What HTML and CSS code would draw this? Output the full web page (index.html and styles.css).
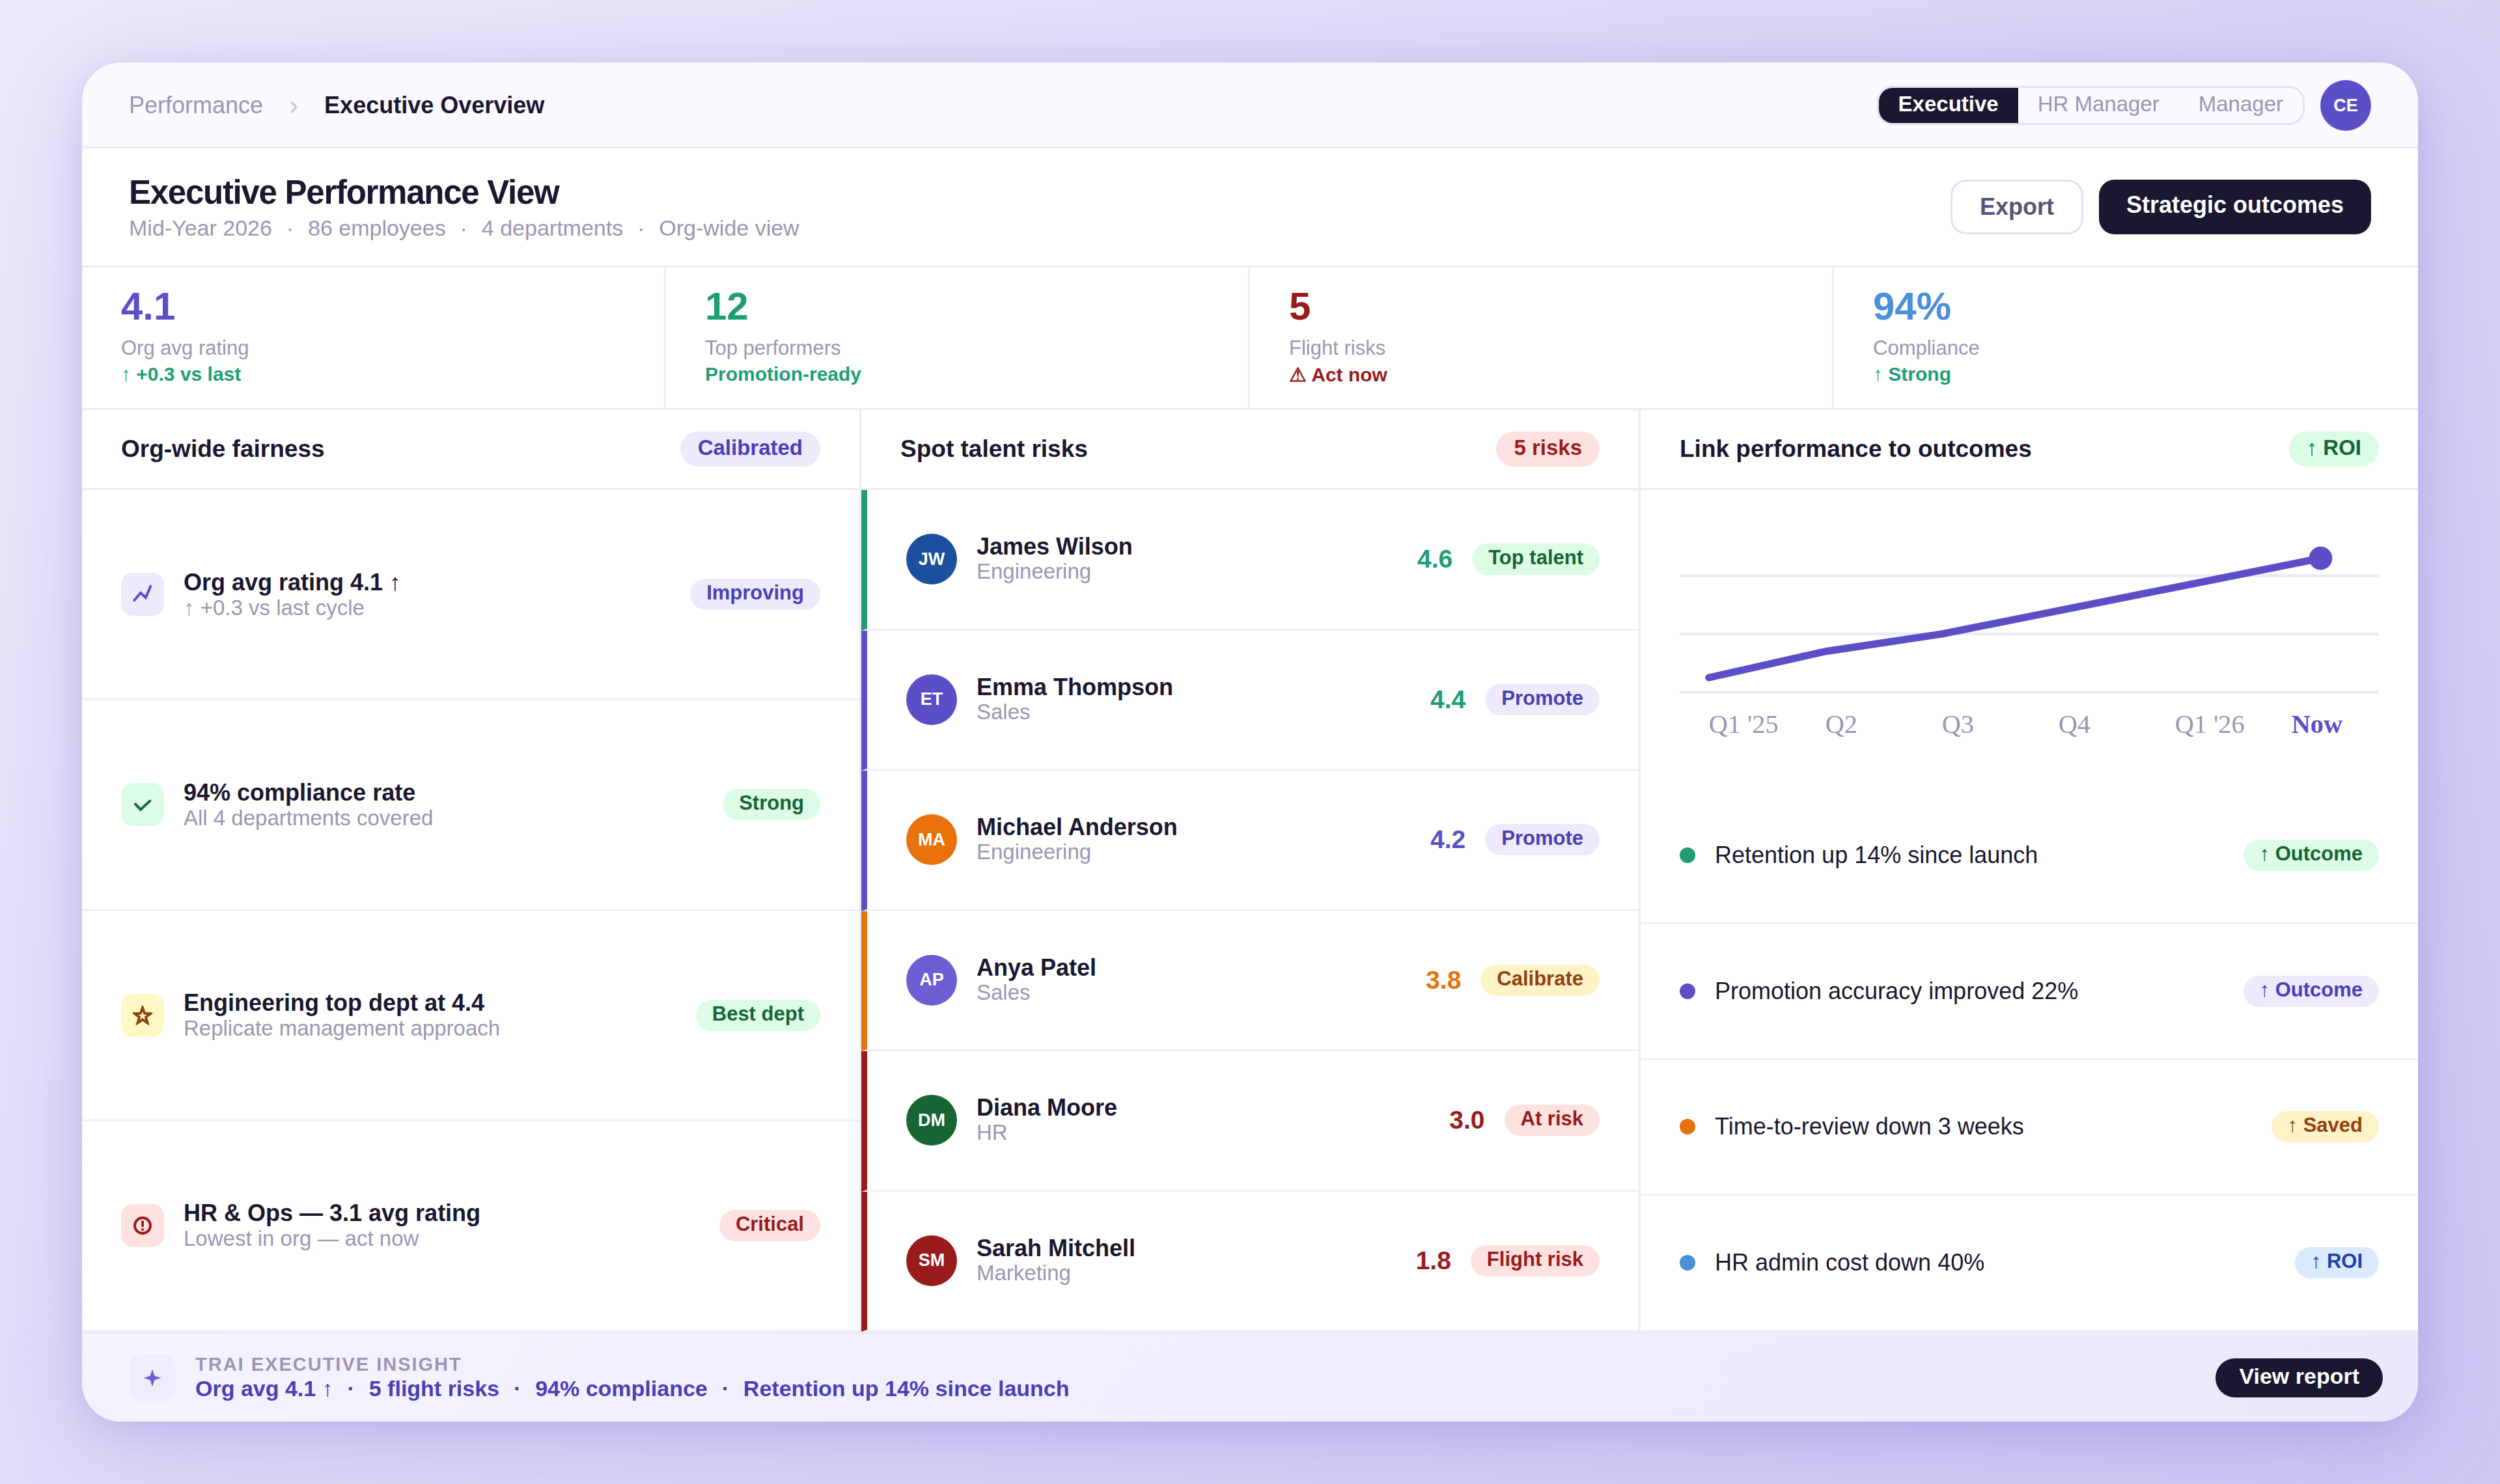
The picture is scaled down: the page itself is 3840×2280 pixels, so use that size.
FILE: index.html
```
<!DOCTYPE html>
<html lang="en">
<head>
    <meta charset="UTF-8">
    <meta name="viewport" content="width=device-width, initial-scale=1.0">
    <title>Executive Performance View</title>
    <link rel="stylesheet" href="styles.css">
</head>
<body>
    <div class="card">
        <header class="topbar">
            <nav class="breadcrumb">
                <a href="#">Performance</a>
                <span class="sep">›</span>
                <strong>Executive Overview</strong>
            </nav>
            <div class="topbar-right">
                <div class="tabs">
                    <button class="tab active">Executive</button>
                    <button class="tab">HR Manager</button>
                    <button class="tab">Manager</button>
                </div>
                <div class="avatar user">CE</div>
            </div>
        </header>

        <section class="page-head">
            <div>
                <h1>Executive Performance View</h1>
                <p>Mid-Year 2026 &nbsp;<i>·</i>&nbsp; 86 employees &nbsp;<i>·</i>&nbsp; 4 departments &nbsp;<i>·</i>&nbsp; Org-wide view</p>
            </div>
            <div class="actions">
                <button class="btn outline">Export</button>
                <button class="btn primary">Strategic outcomes</button>
            </div>
        </section>

        <section class="kpis">
            <div class="kpi">
                <div class="value c-purple">4.1</div>
                <div class="label">Org avg rating</div>
                <div class="delta c-green">↑ +0.3 vs last</div>
            </div>
            <div class="kpi">
                <div class="value c-green">12</div>
                <div class="label">Top performers</div>
                <div class="delta c-green">Promotion-ready</div>
            </div>
            <div class="kpi">
                <div class="value c-red">5</div>
                <div class="label">Flight risks</div>
                <div class="delta c-red">⚠ Act now</div>
            </div>
            <div class="kpi">
                <div class="value c-blue">94%</div>
                <div class="label">Compliance</div>
                <div class="delta c-green">↑ Strong</div>
            </div>
        </section>

        <main class="columns">
            <section class="column">
                <div class="column-head">
                    <h2>Org-wide fairness</h2>
                    <span class="pill large purple">Calibrated</span>
                </div>
                <ul class="rows">
                    <li class="row">
                        <span class="icon purple">
                            <svg viewBox="0 0 10 10"><path d="M.8 8.100L4 4.300l2.600 2.400L9.100.9"/></svg>
                        </span>
                        <div class="info">
                            <h3>Org avg rating 4.1 ↑</h3>
                            <p>↑ +0.3 vs last cycle</p>
                        </div>
                        <span class="pill purple">Improving</span>
                    </li>
                    <li class="row">
                        <span class="icon green">
                            <svg viewBox="0 0 10 10"><path d="M1.300 4.800L4 7.600l4.800-4.400"/></svg>
                        </span>
                        <div class="info">
                            <h3>94% compliance rate</h3>
                            <p>All 4 departments covered</p>
                        </div>
                        <span class="pill green">Strong</span>
                    </li>
                    <li class="row">
                        <span class="icon yellow">
                            <svg viewBox="0 0 10 10"><path d="M5 1.100L6.030 3.980 9.090 4.070 6.660 5.940 7.530 8.880 5 7.150 2.470 8.880 3.340 5.940.91 4.070 3.970 3.980z"/></svg>
                        </span>
                        <div class="info">
                            <h3>Engineering top dept at 4.4</h3>
                            <p>Replicate management approach</p>
                        </div>
                        <span class="pill green">Best dept</span>
                    </li>
                    <li class="row">
                        <span class="icon red">
                            <svg viewBox="0 0 10 10"><circle cx="5" cy="5" r="4"/><path d="M5 3v2.200M5 7v.1"/></svg>
                        </span>
                        <div class="info">
                            <h3>HR &amp; Ops — 3.1 avg rating</h3>
                            <p>Lowest in org — act now</p>
                        </div>
                        <span class="pill red">Critical</span>
                    </li>
                </ul>
            </section>

            <section class="column">
                <div class="column-head">
                    <h2>Spot talent risks</h2>
                    <span class="pill large red">5 risks</span>
                </div>
                <ul class="rows">
                    <li class="row person edge-green">
                        <span class="avatar bg-navy">JW</span>
                        <div class="info">
                            <h3>James Wilson</h3>
                            <p>Engineering</p>
                        </div>
                        <span class="score c-green">4.6</span>
                        <span class="pill green">Top talent</span>
                    </li>
                    <li class="row person edge-purple">
                        <span class="avatar bg-purple">ET</span>
                        <div class="info">
                            <h3>Emma Thompson</h3>
                            <p>Sales</p>
                        </div>
                        <span class="score c-green">4.4</span>
                        <span class="pill purple">Promote</span>
                    </li>
                    <li class="row person edge-purple">
                        <span class="avatar bg-orange">MA</span>
                        <div class="info">
                            <h3>Michael Anderson</h3>
                            <p>Engineering</p>
                        </div>
                        <span class="score c-purple">4.2</span>
                        <span class="pill purple">Promote</span>
                    </li>
                    <li class="row person edge-orange">
                        <span class="avatar bg-violet">AP</span>
                        <div class="info">
                            <h3>Anya Patel</h3>
                            <p>Sales</p>
                        </div>
                        <span class="score c-orange">3.8</span>
                        <span class="pill amber">Calibrate</span>
                    </li>
                    <li class="row person edge-red">
                        <span class="avatar bg-green">DM</span>
                        <div class="info">
                            <h3>Diana Moore</h3>
                            <p>HR</p>
                        </div>
                        <span class="score c-red">3.0</span>
                        <span class="pill red">At risk</span>
                    </li>
                    <li class="row person edge-red">
                        <span class="avatar bg-red">SM</span>
                        <div class="info">
                            <h3>Sarah Mitchell</h3>
                            <p>Marketing</p>
                        </div>
                        <span class="score c-red">1.8</span>
                        <span class="pill red">Flight risk</span>
                    </li>
                </ul>
            </section>

            <section class="column">
                <div class="column-head">
                    <h2>Link performance to outcomes</h2>
                    <span class="pill large green">↑ ROI</span>
                </div>
                <div class="chart">
                    <svg viewBox="0 0 240 80">
                        <g class="grid">
                            <line x1="0" y1="20" x2="240" y2="20"/>
                            <line x1="0" y1="40" x2="240" y2="40"/>
                            <line x1="0" y1="60" x2="240" y2="60"/>
                        </g>
                        <polyline class="trend" points="10,55 50,46 90,40 130,32 170,24 220,14"/>
                        <circle class="point" cx="220" cy="14" r="4"/>
                        <g class="axis">
                            <text x="10" y="74">Q1 '25</text>
                            <text x="50" y="74">Q2</text>
                            <text x="90" y="74">Q3</text>
                            <text x="130" y="74">Q4</text>
                            <text x="170" y="74">Q1 '26</text>
                            <text class="now" x="210" y="74">Now</text>
                        </g>
                    </svg>
                </div>
                <ul class="rows">
                    <li class="row outcome">
                        <span class="dot bg-teal"></span>
                        <span class="info">Retention up 14% since launch</span>
                        <span class="pill green">↑ Outcome</span>
                    </li>
                    <li class="row outcome">
                        <span class="dot bg-purple"></span>
                        <span class="info">Promotion accuracy improved 22%</span>
                        <span class="pill purple">↑ Outcome</span>
                    </li>
                    <li class="row outcome">
                        <span class="dot bg-orange"></span>
                        <span class="info">Time-to-review down 3 weeks</span>
                        <span class="pill amber">↑ Saved</span>
                    </li>
                    <li class="row outcome">
                        <span class="dot bg-blue"></span>
                        <span class="info">HR admin cost down 40%</span>
                        <span class="pill blue">↑ ROI</span>
                    </li>
                </ul>
            </section>
        </main>

        <footer class="insight">
            <span class="spark">
                <svg viewBox="0 0 14 14"><path d="M7 2.500l1.100 3.400L11.500 7 8.100 8.100 7 11.500 5.900 8.100 2.500 7l3.400-1.100z"/></svg>
            </span>
            <div class="info">
                <div class="eyebrow">TRAI EXECUTIVE INSIGHT</div>
                <div class="summary">Org avg 4.1 ↑ &nbsp;<i>·</i>&nbsp; 5 flight risks &nbsp;<i>·</i>&nbsp; 94% compliance &nbsp;<i>·</i>&nbsp; Retention up 14% since launch</div>
            </div>
            <button class="report">View report</button>
        </footer>
    </div>
</body>
</html>
```
FILE: styles.css
```
* {
    box-sizing: border-box;
    margin: 0;
    padding: 0;
}
body {
    min-height: 100vh;
    padding: 96px 126px;
    display: flex;
    background: linear-gradient(135deg, #eeebfb 0%, #ddd7f7 50%, #cec6f2 100%);
    font-family: "Liberation Sans", Arial, sans-serif;
    font-size: 36px;
    color: #1a1730;
}
button {
    font-family: inherit;
    border: none;
    cursor: pointer;
}
ul {
    list-style: none;
}
/* separator dots */
i {
    margin: 0 3px;
    font-style: normal;
}
.card {
    flex: 1;
    display: flex;
    flex-direction: column;
    background: #fff;
    border-radius: 60px;
    overflow: hidden;
    box-shadow: 0 24px 144px rgba(91, 79, 199, 0.22), 0 12px 48px rgba(91, 79, 199, 0.12);
}

/* top bar */
.topbar {
    height: 132px;
    padding: 3px 72px 0;
    display: flex;
    align-items: center;
    justify-content: space-between;
    background: #faf9ff;
    border-bottom: 3px solid #edeaf8;
}
.breadcrumb {
    display: flex;
    align-items: center;
    gap: 40px;
}
.breadcrumb a {
    color: #9b96b4;
    text-decoration: none;
}
.sep {
    font-size: 42px;
    color: #c8c3de;
}
.topbar-right {
    display: flex;
    align-items: center;
    gap: 24px;
}
.tabs {
    display: flex;
    border: 3px solid #e4e0f5;
    border-radius: 24px;
    overflow: hidden;
}
.tab {
    padding: 6px 30px 10px;
    font-size: 33px;
    line-height: 38px;
    color: #9b96b4;
    background: none;
}
.tab.active {
    background: #1a1730;
    color: #fff;
    font-weight: bold;
}
.avatar {
    width: 78px;
    height: 78px;
    border-radius: 50%;
    display: flex;
    align-items: center;
    justify-content: center;
    flex-shrink: 0;
    font-size: 27px;
    font-weight: bold;
    color: #fff;
}
.user {
    background: #5b4fc7;
}

/* page heading */
.page-head {
    height: 183px;
    padding: 0 72px;
    display: flex;
    align-items: center;
    justify-content: space-between;
    border-bottom: 3px solid #edeaf8;
}
h1 {
    margin-bottom: 3px;
    font-size: 51px;
    line-height: 60px;
    letter-spacing: -0.025em;
}
.page-head p {
    font-size: 34px;
    line-height: 42px;
    color: #9b96b4;
}
.actions {
    display: flex;
    gap: 24px;
}
.btn {
    height: 84px;
    padding: 0 42px;
    border-radius: 24px;
    font-size: 36px;
    font-weight: bold;
}
.btn.outline {
    background: #fff;
    border: 3px solid #e4e0f5;
    color: #5a5478;
}
.btn.primary {
    padding-bottom: 6px;
    background: #1a1730;
    color: #fff;
}

/* key figures */
.kpis {
    height: 219px;
    display: grid;
    grid-template-columns: repeat(4, 1fr);
    border-bottom: 3px solid #edeaf8;
}
.kpi {
    padding: 30px 60px;
    border-right: 3px solid #edeaf8;
}
.kpi:last-child {
    border-right: none;
}
.value {
    font-size: 60px;
    font-weight: bold;
    line-height: 60px;
}
.label {
    margin-top: 16px;
    font-size: 31px;
    line-height: 36px;
    color: #9b96b4;
}
.delta {
    margin-top: 5px;
    font-size: 30px;
    font-weight: bold;
}

/* columns */
.columns {
    flex: 1;
    display: flex;
}
.column {
    flex: 1;
    display: flex;
    flex-direction: column;
    border-right: 3px solid #edeaf8;
}
.column:last-child {
    border-right: none;
}
.column-head {
    height: 123px;
    padding: 0 60px;
    display: flex;
    align-items: center;
    justify-content: space-between;
    border-bottom: 3px solid #edeaf8;
}
h2 {
    font-size: 37px;
}
.rows {
    flex: 1;
    display: flex;
    flex-direction: column;
}
.row {
    flex: 1;
    padding: 0 60px;
    display: flex;
    align-items: center;
    gap: 30px;
    border-bottom: 3px solid #f1eff9;
}
.info {
    flex: 1;
}
h3 {
    font-size: 36px;
    line-height: 41px;
}
.row p {
    font-size: 33px;
    line-height: 38px;
    color: #9b96b4;
}
.person {
    border-left: 9px solid;
}
.person h3, .person p {
    line-height: 38px;
}
.score {
    font-size: 39px;
    font-weight: bold;
}

/* pills */
.pill {
    padding: 4px 25px 8px;
    border-radius: 24px;
    font-size: 31px;
    line-height: 36px;
    font-weight: bold;
    white-space: nowrap;
}
.pill.large {
    padding: 6px 27px 10px;
    border-radius: 27px;
    font-size: 33px;
    line-height: 38px;
}
.purple {
    background: #edeafb;
    color: #4a3fb5;
}
.green {
    background: #dcfce7;
    color: #166534;
}
.red {
    background: #fee2e2;
    color: #991b1b;
}
.yellow {
    background: #fef9c3;
    color: #92400e;
}
.amber {
    background: #fef3c7;
    color: #92400e;
}
.blue {
    background: #dbeafe;
    color: #1e40af;
}

/* icon tiles */
.icon {
    width: 66px;
    height: 66px;
    border-radius: 18px;
    display: flex;
    align-items: center;
    justify-content: center;
}
.icon svg {
    width: 30px;
    height: 30px;
    fill: none;
    stroke: currentColor;
    stroke-width: 1.3;
    stroke-linecap: round;
}
.icon.purple {
    color: #5b4fc7;
}

/* chart */
.chart {
    padding: 42px 60px 58px;
}
.chart svg {
    display: block;
    width: 100%;
}
.grid line {
    stroke: #edeaf8;
    stroke-width: 1;
}
.trend {
    fill: none;
    stroke: #5b4fc7;
    stroke-width: 2.5;
    stroke-linecap: round;
    stroke-linejoin: round;
}
.point {
    fill: #5b4fc7;
}
.axis {
    font-family: "Liberation Serif", "Times New Roman", serif;
    font-size: 9px;
    fill: #9b96b4;
}
.now {
    font-weight: bold;
    fill: #5b4fc7;
}
.dot {
    width: 24px;
    height: 24px;
    border-radius: 50%;
}

/* footer */
.insight {
    height: 138px;
    padding: 0 54px 0 72px;
    display: flex;
    align-items: center;
    gap: 30px;
    background: linear-gradient(135deg, #f5f3ff, #ebe8fb);
    border-top: 3px solid #edeaf8;
}
.spark {
    width: 72px;
    height: 72px;
    border-radius: 21px;
    display: flex;
    align-items: center;
    justify-content: center;
    background: #efecfc;
}
.spark svg {
    width: 42px;
    height: 42px;
    fill: #6c5fd4;
}
.eyebrow {
    font-size: 29px;
    line-height: 33px;
    font-weight: bold;
    letter-spacing: 2px;
    color: #9b96b4;
}
.summary {
    font-size: 34px;
    line-height: 40px;
    font-weight: bold;
    color: #4a3fb5;
}
.report {
    padding: 7px 36px 13px;
    border-radius: 30px;
    font-size: 34px;
    line-height: 40px;
    font-weight: bold;
    background: #1a1730;
    color: #fff;
}

/* text, fill and edge colours */
.c-purple { color: #5b4fc7; }
.c-green { color: #1d9e75; }
.c-red { color: #991b1b; }
.c-blue { color: #4a90d9; }
.c-orange { color: #e8710a; }
.bg-navy { background: #1c4f9c; }
.bg-purple { background: #5b4fc7; }
.bg-violet { background: #6c5fd4; }
.bg-orange { background: #e8710a; }
.bg-green { background: #166534; }
.bg-teal { background: #1d9e75; }
.bg-red { background: #991b1b; }
.bg-blue { background: #4a90d9; }
.edge-green { border-left-color: #1d9e75; }
.edge-purple { border-left-color: #5b4fc7; }
.edge-orange { border-left-color: #e8710a; }
.edge-red { border-left-color: #991b1b; }
```
